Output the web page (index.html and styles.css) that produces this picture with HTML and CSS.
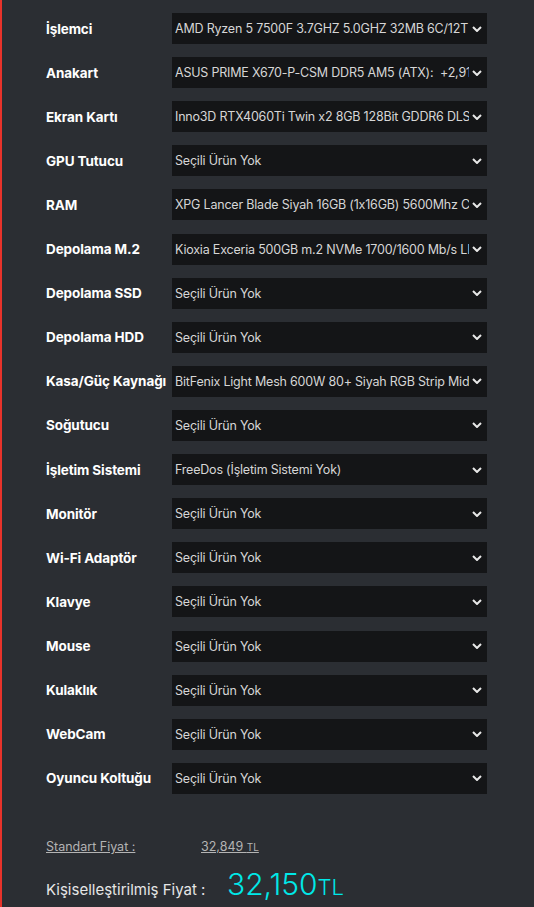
FILE: index.html
```html
<!DOCTYPE html>
<html lang="tr">
<head>
<meta charset="utf-8">
<link rel="stylesheet" href="styles.css">
</head>
<body>
<div class="page">
  <div class="rows">
    <div class="row"><span class="label">İşlemci</span><div class="select"><span class="val">AMD Ryzen 5 7500F 3.7GHZ 5.0GHZ 32MB 6C/12T (Fanlı)</span><svg class="chev" viewBox="0 0 10 6"><path d="M1 1l4 4 4-4"/></svg></div></div>
    <div class="row"><span class="label">Anakart</span><div class="select"><span class="val">ASUS PRIME X670-P-CSM DDR5 AM5 (ATX):&nbsp; +2,917 TL</span><svg class="chev" viewBox="0 0 10 6"><path d="M1 1l4 4 4-4"/></svg></div></div>
    <div class="row"><span class="label">Ekran Kartı</span><div class="select"><span class="val">Inno3D RTX4060Ti Twin x2 8GB 128Bit GDDR6 DLSS 3</span><svg class="chev" viewBox="0 0 10 6"><path d="M1 1l4 4 4-4"/></svg></div></div>
    <div class="row"><span class="label">GPU Tutucu</span><div class="select"><span class="val">Seçili Ürün Yok</span><svg class="chev" viewBox="0 0 10 6"><path d="M1 1l4 4 4-4"/></svg></div></div>
    <div class="row"><span class="label">RAM</span><div class="select"><span class="val">XPG Lancer Blade Siyah 16GB (1x16GB) 5600Mhz CL46</span><svg class="chev" viewBox="0 0 10 6"><path d="M1 1l4 4 4-4"/></svg></div></div>
    <div class="row"><span class="label">Depolama M.2</span><div class="select"><span class="val">Kioxia Exceria 500GB m.2 NVMe 1700/1600 Mb/s LRC</span><svg class="chev" viewBox="0 0 10 6"><path d="M1 1l4 4 4-4"/></svg></div></div>
    <div class="row"><span class="label">Depolama SSD</span><div class="select"><span class="val">Seçili Ürün Yok</span><svg class="chev" viewBox="0 0 10 6"><path d="M1 1l4 4 4-4"/></svg></div></div>
    <div class="row"><span class="label">Depolama HDD</span><div class="select"><span class="val">Seçili Ürün Yok</span><svg class="chev" viewBox="0 0 10 6"><path d="M1 1l4 4 4-4"/></svg></div></div>
    <div class="row"><span class="label">Kasa/Güç Kaynağı</span><div class="select"><span class="val">BitFenix Light Mesh 600W 80+ Siyah RGB Strip Mid Tower</span><svg class="chev" viewBox="0 0 10 6"><path d="M1 1l4 4 4-4"/></svg></div></div>
    <div class="row"><span class="label">Soğutucu</span><div class="select"><span class="val">Seçili Ürün Yok</span><svg class="chev" viewBox="0 0 10 6"><path d="M1 1l4 4 4-4"/></svg></div></div>
    <div class="row"><span class="label">İşletim Sistemi</span><div class="select"><span class="val">FreeDos (İşletim Sistemi Yok)</span><svg class="chev" viewBox="0 0 10 6"><path d="M1 1l4 4 4-4"/></svg></div></div>
    <div class="row"><span class="label">Monitör</span><div class="select"><span class="val">Seçili Ürün Yok</span><svg class="chev" viewBox="0 0 10 6"><path d="M1 1l4 4 4-4"/></svg></div></div>
    <div class="row"><span class="label">Wi-Fi Adaptör</span><div class="select"><span class="val">Seçili Ürün Yok</span><svg class="chev" viewBox="0 0 10 6"><path d="M1 1l4 4 4-4"/></svg></div></div>
    <div class="row"><span class="label">Klavye</span><div class="select"><span class="val">Seçili Ürün Yok</span><svg class="chev" viewBox="0 0 10 6"><path d="M1 1l4 4 4-4"/></svg></div></div>
    <div class="row"><span class="label">Mouse</span><div class="select"><span class="val">Seçili Ürün Yok</span><svg class="chev" viewBox="0 0 10 6"><path d="M1 1l4 4 4-4"/></svg></div></div>
    <div class="row"><span class="label">Kulaklık</span><div class="select"><span class="val">Seçili Ürün Yok</span><svg class="chev" viewBox="0 0 10 6"><path d="M1 1l4 4 4-4"/></svg></div></div>
    <div class="row"><span class="label">WebCam</span><div class="select"><span class="val">Seçili Ürün Yok</span><svg class="chev" viewBox="0 0 10 6"><path d="M1 1l4 4 4-4"/></svg></div></div>
    <div class="row"><span class="label">Oyuncu Koltuğu</span><div class="select"><span class="val">Seçili Ürün Yok</span><svg class="chev" viewBox="0 0 10 6"><path d="M1 1l4 4 4-4"/></svg></div></div>
  </div>
  <div class="prices">
    <div class="std"><span class="std-label">Standart Fiyat :</span><span class="std-val">32,849 <small>TL</small></span></div>
    <div class="custom"><span class="custom-label">Kişiselleştirilmiş Fiyat :</span><span class="custom-val">32,150<span class="tl">TL</span></span></div>
  </div>
</div>
</body>
</html>
```

FILE: styles.css
```css
html, body {
  margin: 0;
  padding: 0;
  background: #2b2e33;
  height: 100%;
}
body {
  font-family: Inter, "Noto Sans", "Liberation Sans", sans-serif;
  border-left: 2px solid #e8332b;
  box-sizing: border-box;
  overflow: hidden;
}
.page {
  padding: 13px 0 0 44px;
}
.rows {
  display: flex;
  flex-direction: column;
  gap: 13.12px;
}
.row {
  display: flex;
  align-items: center;
  height: 31px;
}
.label {
  width: 126px;
  flex: none;
  color: #ffffff;
  font-weight: 700;
  font-size: 13.5px;
  letter-spacing: -0.1px;
  white-space: nowrap;
}
.select {
  width: 315px;
  height: 31px;
  background: #141517;
  display: flex;
  align-items: center;
  padding-left: 3px;
  box-sizing: border-box;
  position: relative;
}
.val {
  flex: 1;
  overflow: hidden;
  white-space: nowrap;
  color: #d6d6d6;
  font-size: 12.5px;
  letter-spacing: -0.2px;
  margin-right: 3px;
}
.chev {
  width: 10px;
  height: 6px;
  flex: none;
  margin-right: 5px;
  fill: none;
  stroke: #e8e8e8;
  stroke-width: 2;
}
.prices {
  margin-top: 45px;
}
.std {
  display: flex;
  font-size: 12.5px;
  color: #b4b4b4;
}
.std-label {
  width: 155px;
  text-decoration: underline;
}
.std-val {
  text-decoration: underline;
}
.std-val small {
  font-size: 10px;
}
.custom {
  display: flex;
  align-items: baseline;
  margin-top: 12px;
}
.custom-label {
  color: #e6e6e6;
  font-size: 15px;
  width: 181px;
}
.custom-val {
  color: #00e8e8;
  font-size: 30px;
  font-weight: 300;
}
.custom-val .tl {
  font-size: 22px;
}
```
